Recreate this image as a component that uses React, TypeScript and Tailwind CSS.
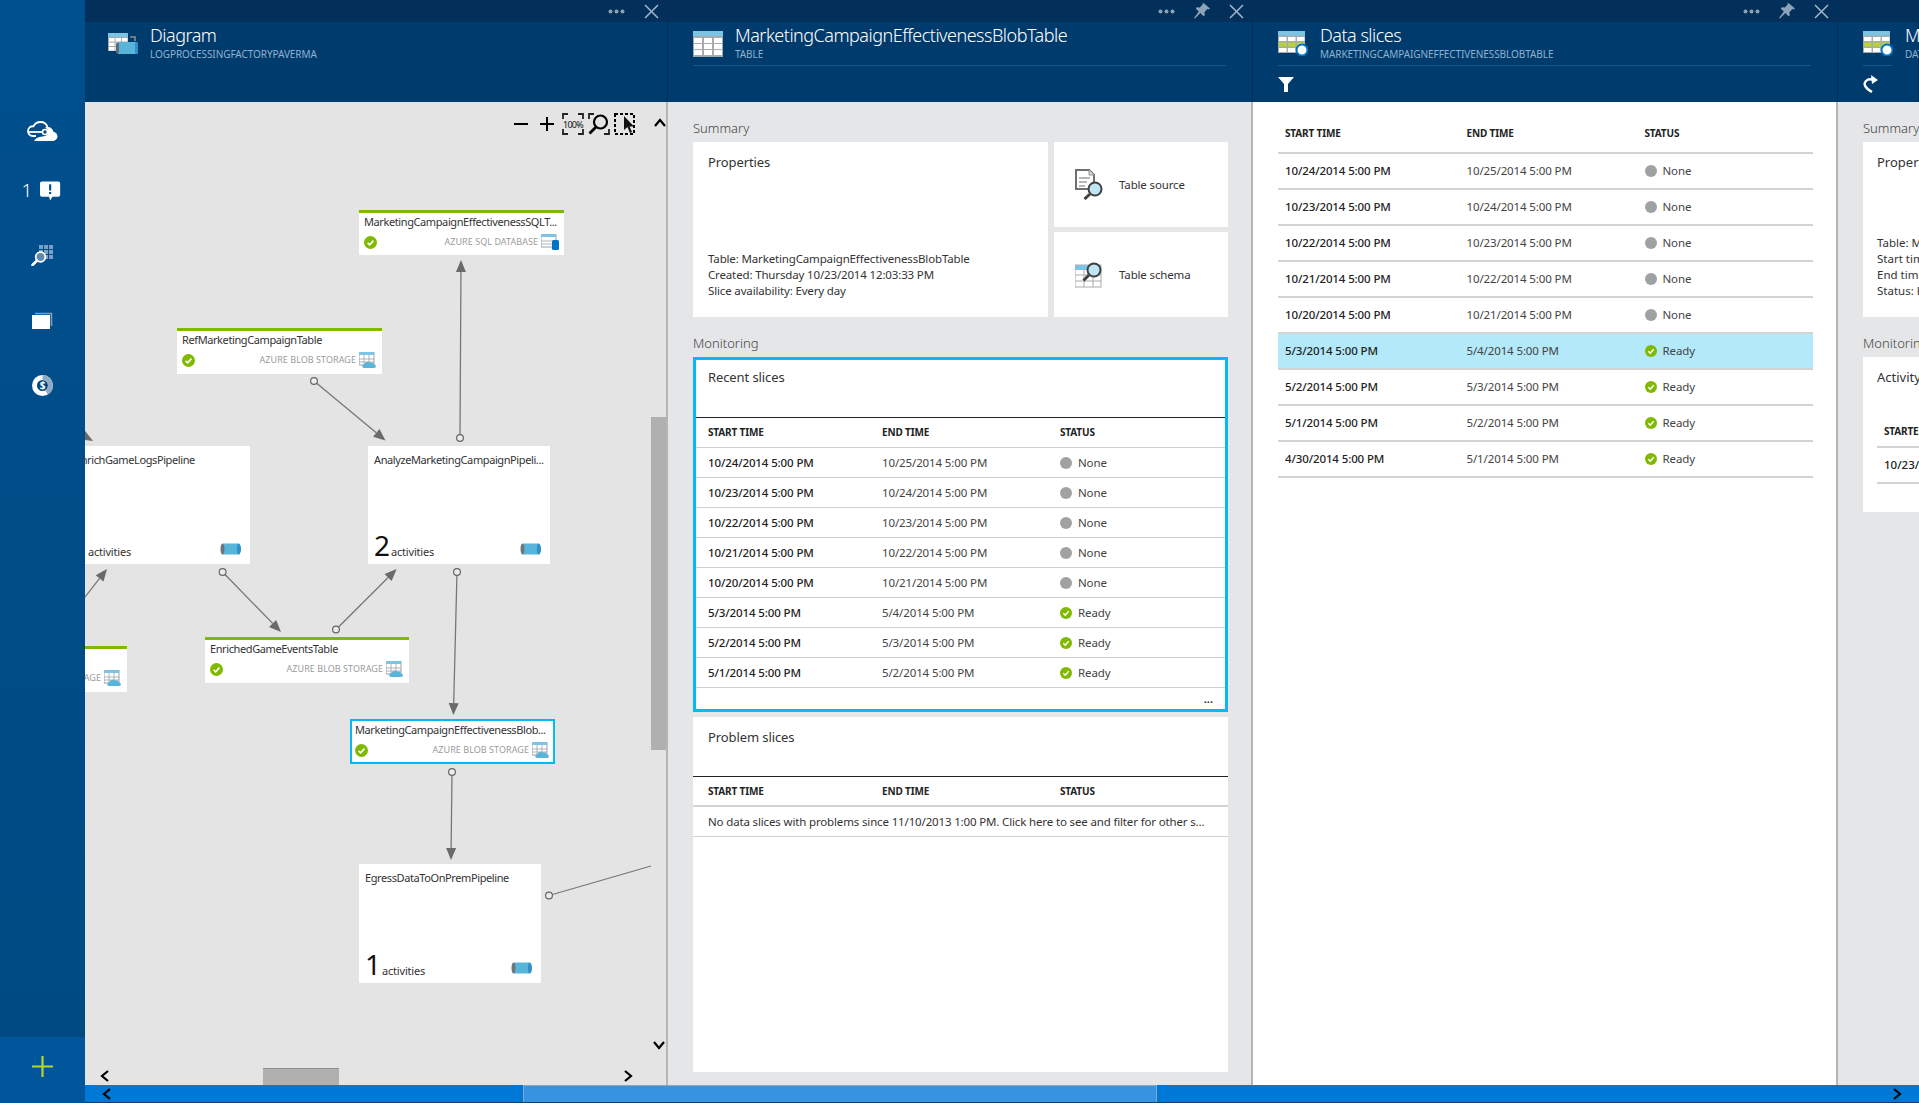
import React from "react";

type SliceRow = [string, string, "None" | "Ready"];

const recentRows: SliceRow[] = [
  ["10/24/2014 5:00 PM", "10/25/2014 5:00 PM", "None"],
  ["10/23/2014 5:00 PM", "10/24/2014 5:00 PM", "None"],
  ["10/22/2014 5:00 PM", "10/23/2014 5:00 PM", "None"],
  ["10/21/2014 5:00 PM", "10/22/2014 5:00 PM", "None"],
  ["10/20/2014 5:00 PM", "10/21/2014 5:00 PM", "None"],
  ["5/3/2014 5:00 PM", "5/4/2014 5:00 PM", "Ready"],
  ["5/2/2014 5:00 PM", "5/3/2014 5:00 PM", "Ready"],
  ["5/1/2014 5:00 PM", "5/2/2014 5:00 PM", "Ready"],
];
const allRows: SliceRow[] = [...recentRows, ["4/30/2014 5:00 PM", "5/1/2014 5:00 PM", "Ready"]];

function CheckDot({ size = 13 }: { size?: number }) {
  return (
    <svg width={size} height={size} viewBox="0 0 13 13" className="shrink-0">
      <circle cx="6.5" cy="6.5" r="6.5" fill="#7fba00" />
      <path d="M3.6 6.8 5.7 8.8 9.4 4.6" fill="none" stroke="#fff" strokeWidth="1.6" />
    </svg>
  );
}

function StatusIcon({ status }: { status: "None" | "Ready" }) {
  return status === "Ready" ? <CheckDot size={12} /> : <span className="h-3 w-3 shrink-0 rounded-full bg-[#a0a1a2]" />;
}

function TableIcon() {
  return (
    <svg width="30" height="26" viewBox="0 0 30 26">
      <rect width="30" height="26" fill="#a7abae" />
      <rect width="30" height="5" fill="#7cc4e4" />
      {[7, 13, 19].map((y) =>
        [1, 11, 21].map((x) => <rect key={x + "-" + y} x={x} y={y} width="8" height="5" fill="#fff" />)
      )}
    </svg>
  );
}

function SliceIcon() {
  return (
    <svg width="30" height="25" viewBox="0 0 30 25">
      <rect width="27" height="22" fill="#a7abae" />
      <rect width="27" height="4.5" fill="#7cc4e4" />
      {[6, 11.5, 17].map((y, r) =>
        [1, 10, 19].map((x) => (
          <rect key={x + "-" + y} x={x} y={y} width="7.5" height="4" fill={r === 1 ? "#b8d432" : "#fff"} />
        ))
      )}
      <circle cx="24" cy="19" r="5.5" fill="#fff" stroke="#0072c6" strokeWidth="2" />
    </svg>
  );
}

function DiagramIcon() {
  return (
    <svg width="31" height="22" viewBox="0 0 31 22">
      <rect x="0" y="0" width="20" height="18" fill="#a7abae" />
      <rect x="0" y="0" width="20" height="4" fill="#7cc4e4" />
      {[5, 9.5, 14].map((y) =>
        [1, 7.5, 14].map((x) => <rect key={x + "-" + y} x={x} y={y} width="5.5" height="3.5" fill="#fff" />)
      )}
      <path d="M22 4h5v4" fill="none" stroke="#8a8f93" strokeWidth="1.6" />
      <rect x="9" y="9" width="21" height="12" rx="2" fill="#59b4d9" />
      <rect x="8" y="9.5" width="3" height="11" rx="1.5" fill="#5a6a78" />
      <rect x="27" y="9" width="3" height="12" rx="1.5" fill="#2f8fc9" />
    </svg>
  );
}

function Dots() {
  return (
    <svg width="17" height="5" viewBox="0 0 17 5">
      <circle cx="2.5" cy="2.5" r="2" fill="#8da4b8" />
      <circle cx="8.5" cy="2.5" r="2" fill="#8da4b8" />
      <circle cx="14.5" cy="2.5" r="2" fill="#8da4b8" />
    </svg>
  );
}

function Pin() {
  return (
    <svg width="16" height="16" viewBox="0 0 16 16">
      <path d="M9.5 0 16 5.5l-1.6 1-1-.5-3 3.2.4 3-1.4 1L6.4 9.9 1 15.5l-1-.5 4.8-6.4L1.8 5.8l1-1.6 3 .2 3-3.2-.3-.9z" fill="#8da4b8" />
    </svg>
  );
}

function Close() {
  return (
    <svg width="15" height="15" viewBox="0 0 15 15">
      <path d="M1 1 14 14M14 1 1 14" stroke="#a4b7c8" strokeWidth="1.5" />
    </svg>
  );
}

function BladeHeader({
  icon,
  title,
  subtitle,
  pin = true,
  left = false,
  rule = true,
  actions = true,
  command,
}: {
  icon: React.ReactNode;
  title: string;
  subtitle: string;
  pin?: boolean;
  left?: boolean;
  rule?: boolean;
  actions?: boolean;
  command?: React.ReactNode;
}) {
  return (
    <div className="flex h-[102px] shrink-0 flex-col border-r border-[#002f57]">
      <div className="flex h-[22px] items-center justify-end bg-[#02305a] pr-[0px]">
        {actions && (
          <div className="-mr-[2px] flex items-center">
            <span className="flex w-[35px] justify-center"><Dots /></span>
            {pin && <span className="flex w-[35px] justify-center"><Pin /></span>}
            <span className="flex w-[35px] justify-center"><Close /></span>
          </div>
        )}
      </div>
      <div className={"flex flex-1 flex-col bg-[#003b6e] pr-[26px] " + (left ? "pl-[23px]" : "pl-[25px]")}>
        <div className={"flex h-[44px] " + (rule ? "border-b border-[#1c5688]" : "")}>
          <div className={"flex w-[42px] shrink-0 items-start " + (left ? "pt-[11px]" : "pt-[9px]")}>{icon}</div>
          <div className="min-w-0 whitespace-nowrap">
            <div className="text-[18px] font-light leading-[26px] tracking-[-0.5px] text-white">{title}</div>
            <div className="-mt-px text-[10px] leading-[14px] tracking-[-0.07px] text-[#8fb2cf]">{subtitle}</div>
          </div>
        </div>
        <div className="flex flex-1 items-center">{command}</div>
      </div>
    </div>
  );
}

function Sidebar() {
  return (
    <div className="flex w-[85px] shrink-0 flex-col bg-linear-to-b from-[#004f8e] to-[#004a82]">
      <div className="flex flex-1 flex-col items-center">
        <svg width="31" height="21" viewBox="0 0 31 21" className="mt-[121px]">
          <path d="M9 15H6C2.500 15 1 12.500 1 10 1 7 3.500 5 6.500 5.300 8 2 11 1 13.500 1 17 1 19.500 3 20.500 6" fill="none" stroke="#fff" strokeWidth="1.800" />
          <path d="M7 20C10 15 15 16 18 15 21 14 22 11 20 8L18 6.500C19 6 20 6 20.500 6 24 6 26 8 26.500 11 29 11 30.500 13.500 30.500 15.500 30.500 18 28 20 25 20Z" fill="#fff" />
          <path d="M2 11H15" stroke="#fff" strokeWidth="1.800" />
          <circle cx="18" cy="11" r="2.500" fill="#004d8a" stroke="#fff" strokeWidth="1.600" />
        </svg>
        <div className="mt-[39px] flex h-[20px] w-[36px] items-start gap-[8px] self-center">
          <span className="-ml-[3px] text-[19px] font-light leading-[18px] text-white">1</span>
          <svg width="21" height="20" viewBox="0 0 21 20">
            <path d="M2 0h17a2 2 0 0 1 2 2v12a2 2 0 0 1-2 2h-6l-2.500 4-1-4H2a2 2 0 0 1-2-2V2a2 2 0 0 1 2-2z" fill="#fff" />
            <rect x="9.500" y="3" width="2.200" height="6.500" fill="#004d8a" />
            <rect x="9.500" y="11" width="2.200" height="2.200" fill="#004d8a" />
          </svg>
        </div>
        <svg width="23" height="21" viewBox="0 0 23 21" className="mt-[44px]">
          {[0, 5, 10].map((y) =>
            [8, 13, 18].map((x) => <rect key={x + "-" + y} x={x} y={y} width="4" height="4" fill="#7f9fc0" />)
          )}
          <circle cx="9.500" cy="12" r="4.800" fill="#5f88b0" stroke="#fff" strokeWidth="1.800" />
          <path d="M6 15.500 1.500 20" stroke="#fff" strokeWidth="2.600" strokeLinecap="round" />
        </svg>
        <svg width="21" height="17" viewBox="0 0 21 17" className="mt-[46px]">
          <path d="M3 1.500h16.500V14" fill="none" stroke="#7f9fc0" strokeWidth="1.600" />
          <rect x="0" y="3" width="18" height="14" fill="#fff" />
        </svg>
        <svg width="21" height="21" viewBox="0 0 21 21" className="mt-[46px]">
          <circle cx="10.500" cy="10.500" r="8" fill="#00467c" stroke="#fff" strokeWidth="5" />
          <path d="M10.500 2.500a8 8 0 0 1 8 8 8 8 0 0 1-4 6.900" fill="none" stroke="#8eaac4" strokeWidth="5" />
          <text x="10.500" y="14" textAnchor="middle" fontSize="10" fontWeight="700" fill="#fff">$</text>
        </svg>
      </div>
      <div className="flex h-[66px] items-center justify-center bg-[#00559b] pb-[8px]">
        <svg width="21" height="21" viewBox="0 0 21 21">
          <path d="M10.500 0v21M0 10.500h21" stroke="#b8d432" strokeWidth="2.200" />
        </svg>
      </div>
    </div>
  );
}

function Chevron({ dir, className, color = "#000" }: { dir: "l" | "r" | "u" | "d"; className?: string; color?: string }) {
  const d = { l: "M8 1 2 6l6 5", r: "M2 1l6 5-6 5", u: "M1 8l5-6 5 6", d: "M1 2l5 6 5-6" }[dir];
  return (
    <svg width={dir === "l" || dir === "r" ? 10 : 12} height={dir === "l" || dir === "r" ? 12 : 10} viewBox={dir === "l" || dir === "r" ? "0 0 10 12" : "0 0 12 10"} className={className}>
      <path d={d} fill="none" stroke={color} strokeWidth="2.200" />
    </svg>
  );
}

function Toolbar() {
  return (
    <div className="absolute right-[30px] top-[11px] flex h-[22px] items-center">
      <svg width="14" height="2" viewBox="0 0 14 2" className="mr-[12px]"><rect width="14" height="2" fill="#000" /></svg>
      <svg width="14" height="14" viewBox="0 0 14 14" className="mr-[8px]"><path d="M7 0v14M0 7h14" stroke="#000" strokeWidth="2" /></svg>
      <span className="relative mr-[4px] flex h-[22px] w-[22px] items-center justify-center text-[9px] leading-none tracking-[-0.7px] text-[#111]">
        <svg width="22" height="22" viewBox="0 0 22 22" className="absolute inset-0">
          <path d="M6 1H1v5M16 1h5v5M6 21H1v-5M16 21h5v-5" fill="none" stroke="#222" strokeWidth="1.800" />
        </svg>
        100%
      </span>
      <svg width="22" height="22" viewBox="0 0 22 22" className="mr-[4px]">
        <path d="M6 1H1v5M16 21h5v-5" fill="none" stroke="#222" strokeWidth="1.800" />
        <circle cx="12.500" cy="9" r="6.500" fill="none" stroke="#000" strokeWidth="2.200" />
        <path d="M8 14 1.500 20.500" stroke="#000" strokeWidth="2.800" />
      </svg>
      <svg width="22" height="22" viewBox="0 0 22 22">
        <rect x="1" y="1" width="19" height="20" fill="none" stroke="#000" strokeWidth="2" strokeDasharray="3 2" />
        <path d="M10 3v14l3.500-3 2.500 6 2-1-2.500-5.500H20z" fill="#111" />
      </svg>
    </div>
  );
}

function BlobGlyph() {
  return (
    <svg width="18" height="16" viewBox="0 0 18 16" className="shrink-0">
      <rect x="0" y="0" width="15" height="13" fill="#fff" stroke="#9ba1a6" />
      <rect x="0" y="0" width="15" height="3" fill="#7cc4e4" />
      <path d="M0 7h15M0 10h15M5 3v10M10 3v10" stroke="#9ba1a6" strokeWidth=".8" />
      <path d="M5 16c-2 0-2.500-3 0-3.400C6 10 9 9 11 10.500c2-.5 3.500.5 4 2 2 0 3 3.500 0 3.500z" fill="#59b4d9" />
    </svg>
  );
}

function SqlGlyph() {
  return (
    <svg width="18" height="16" viewBox="0 0 18 16" className="shrink-0">
      <rect x="0" y="0" width="15" height="13" fill="#fff" stroke="#9ba1a6" />
      <rect x="0" y="0" width="15" height="3" fill="#7cc4e4" />
      <path d="M0 7h15M0 10h15" stroke="#9ba1a6" strokeWidth=".8" />
      <rect x="11" y="6" width="7" height="10" rx="1.500" fill="#0072c6" />
    </svg>
  );
}

function PipeGlyph() {
  return (
    <svg width="21" height="12" viewBox="0 0 21 12" className="shrink-0">
      <path d="M3 .5H18.500C20.500 2 21 4 21 6S20.500 10 18.500 11.500H3Z" fill="#59b4d9" />
      <ellipse cx="2.500" cy="6" rx="2" ry="5.500" fill="#6b7680" />
      <ellipse cx="18.800" cy="6" rx="2" ry="5.500" fill="#2f8fc9" />
    </svg>
  );
}

function DatasetNode({
  pos,
  name,
  kind,
  glyph,
  selected = false,
  check = true,
}: {
  pos: string;
  name: string;
  kind: string;
  glyph: React.ReactNode;
  selected?: boolean;
  check?: boolean;
}) {
  return (
    <div className={"absolute overflow-hidden bg-white " + pos + " " + (selected ? "border-[2px] border-[#00bcf2]" : "border-t-[3px] border-[#7fba00]")}>
      <div className={"h-[18px] overflow-hidden whitespace-nowrap text-[11px] leading-[18px] tracking-[-0.4px] text-[#333] " + (selected ? "px-[3px]" : "px-[5px]")}>{name}</div>
      <div className={"flex h-[22px] items-center justify-end " + (selected ? "px-[3px]" : "px-[5px]")}>
        {check && <CheckDot />}
        {check && <span className="flex-1" />}
        <span className="mr-[3px] shrink-0 whitespace-nowrap text-[9px] tracking-[0.05px] text-[#9b9b9b]">{kind}</span>
        {glyph}
      </div>
    </div>
  );
}

function PipelineNode({ pos, name, count, nameClass = "", padClass = "pl-[6px]" }: { pos: string; name: string; count?: string; nameClass?: string; padClass?: string }) {
  return (
    <div className={"absolute flex flex-col justify-between overflow-hidden bg-white pb-[4px] pt-[6px] " + pos}>
      <div className={"whitespace-nowrap text-[11px] leading-[16px] tracking-[-0.4px] text-[#333] " + padClass + " " + nameClass}>{name}</div>
      <div className={"flex items-end justify-between pr-[9px] " + padClass}>
        <div className="flex items-baseline gap-px">
          {count && <span className="text-[28px] leading-[30px] text-[#111]">{count}</span>}
          <span className="text-[11px] tracking-[-0.2px] text-[#333]">activities</span>
        </div>
        <span className="mb-[5px]"><PipeGlyph /></span>
      </div>
    </div>
  );
}

const links: [number, number, number, number][] = [
  [314, 381, 385.5, 440.500],
  [460, 438, 461, 260],
  [457, 572, 453.400, 715],
  [222.600, 572, 281, 632],
  [336, 629.500, 396.600, 569],
  [452, 772, 451, 860],
];

function Arrow({ x1, y1, x2, y2, start = true }: { x1: number; y1: number; x2: number; y2: number; start?: boolean }) {
  const a = Math.atan2(y2 - y1, x2 - x1);
  const len = 12;
  const wid = 5;
  const bx = x2 - len * Math.cos(a);
  const by = y2 - len * Math.sin(a);
  const px = -Math.sin(a) * wid;
  const py = Math.cos(a) * wid;
  return (
    <g>
      <line x1={x1} y1={y1} x2={bx} y2={by} stroke="#777" strokeWidth="1.300" />
      <polygon points={`${x2},${y2} ${bx + px},${by + py} ${bx - px},${by - py}`} fill="#6a6a6a" />
      {start && <circle cx={x1} cy={y1} r="3.400" fill="#ececec" stroke="#666" strokeWidth="1.200" />}
    </g>
  );
}

function DiagramBody() {
  return (
    <div className="relative flex-1 overflow-hidden border-r-2 border-[#b3b5b7] bg-[#e4e4e4]">
      <svg className="absolute inset-0" width="582" height="983" viewBox="85 102 582 983">
        {links.map((l, i) => (
          <Arrow key={i} x1={l[0]} y1={l[1]} x2={l[2]} y2={l[3]} />
        ))}
        <Arrow x1={74} y1={611} x2={107} y2={569} start={false} />
        <Arrow x1={70} y1={428} x2={93} y2={441} start={false} />
        <line x1="549" y1="895.500" x2="651" y2="866" stroke="#777" strokeWidth="1.300" />
        <circle cx="549" cy="895.500" r="3.400" fill="#ececec" stroke="#666" strokeWidth="1.200" />
      </svg>

      <Toolbar />
      <Chevron dir="u" className="absolute left-[569px] top-[16px]" />
      <Chevron dir="d" className="absolute left-[568px] top-[938px]" />
      <Chevron dir="l" className="absolute left-[15px] top-[968px]" />
      <Chevron dir="r" className="absolute left-[538px] top-[968px]" />
      <div className="absolute left-[566px] top-[315px] h-[333px] w-[15px] bg-[#b0b0b0]" />
      <div className="absolute left-[178px] top-[966px] h-[17px] w-[76px] border-t border-[#8f8f8f] bg-[#b0b0b0]" />

      <DatasetNode pos="left-[274px] top-[108px] h-[45px] w-[205px]" name="MarketingCampaignEffectivenessSQLT..." kind="AZURE SQL DATABASE" glyph={<SqlGlyph />} />
      <DatasetNode pos="left-[92px] top-[226px] h-[46px] w-[205px]" name="RefMarketingCampaignTable" kind="AZURE BLOB STORAGE" glyph={<BlobGlyph />} />
      <PipelineNode pos="left-0 top-[344px] h-[118px] w-[165px]" name="EnrichGameLogsPipeline" nameClass="-ml-[13px]" padClass="pl-[3px]" />
      <PipelineNode pos="left-[283px] top-[344px] h-[118px] w-[182px]" name="AnalyzeMarketingCampaignPipeli..." count="2" />
      <DatasetNode pos="left-[120px] top-[535px] h-[46px] w-[204px]" name="EnrichedGameEventsTable" kind="AZURE BLOB STORAGE" glyph={<BlobGlyph />} />
      <DatasetNode pos="left-0 top-[544px] h-[46px] w-[42px]" name="" kind="AZURE BLOB STORAGE" glyph={<BlobGlyph />} check={false} />
      <DatasetNode pos="left-[265px] top-[617px] h-[45px] w-[205px]" name="MarketingCampaignEffectivenessBlob..." kind="AZURE BLOB STORAGE" glyph={<BlobGlyph />} selected />
      <PipelineNode pos="left-[274px] top-[762px] h-[119px] w-[182px]" name="EgressDataToOnPremPipeline" count="1" />
    </div>
  );
}

function SliceHeader({ widths }: { widths: [string, string] }) {
  return (
    <>
      <span className={"shrink-0 " + widths[0]}>START TIME</span>
      <span className={"shrink-0 " + widths[1]}>END TIME</span>
      <span>STATUS</span>
    </>
  );
}

function SliceCells({ row, widths }: { row: SliceRow; widths: [string, string] }) {
  return (
    <>
      <span className={"shrink-0 font-medium text-[#222] " + widths[0]}>{row[0]}</span>
      <span className={"shrink-0 text-[#444] " + widths[1]}>{row[1]}</span>
      <span className="flex items-center gap-[6px] text-[#444]">
        <StatusIcon status={row[2]} />
        {row[2]}
      </span>
    </>
  );
}

const cardCols: [string, string] = ["w-[174px]", "w-[178px]"];
const fullCols: [string, string] = ["w-[181.500px]", "w-[178px]"];

function TableSection({ title, children, className }: { title: string; children: React.ReactNode; className: string }) {
  return (
    <div className={"flex flex-col bg-white " + className}>
      <div className="h-[60px] shrink-0 border-b border-[#222] pl-[15px] pt-[10px] text-[13px] leading-[20px] tracking-[-0.1px] text-[#333]">{title}</div>
      <div className="flex h-[30px] shrink-0 items-center border-b-2 border-[#d4d4d4] pl-[15px] text-[10px] font-bold tracking-[-0.15px] text-[#222]">
        <SliceHeader widths={cardCols} />
      </div>
      {children}
    </div>
  );
}

function TableBlade() {
  return (
    <div className="flex w-[585px] shrink-0 flex-col">
      <BladeHeader icon={<TableIcon />} title="MarketingCampaignEffectivenessBlobTable" subtitle="TABLE" />
      <div className="flex flex-1 flex-col border-r-2 border-[#b3b5b7] bg-[#e4e6e8] pl-[25px] pr-[23px] pt-[14px]">
        <div className="mb-[2px] h-[24px] text-[13px] font-light leading-[24px] text-[#444]">Summary</div>
        <div className="flex h-[175px] shrink-0 gap-[6px]">
          <div className="flex w-[355px] flex-col justify-between bg-white pb-[18px] pl-[15px] pt-[10px] text-[#333]">
            <div className="text-[13px] leading-[20px] tracking-[-0.1px]">Properties</div>
            <div className="text-[11.500px] leading-[16px] tracking-[-0.15px]">
              <div>Table: MarketingCampaignEffectivenessBlobTable</div>
              <div>Created: Thursday 10/23/2014 12:03:33 PM</div>
              <div>Slice availability: Every day</div>
            </div>
          </div>
          <div className="flex w-[174px] flex-col gap-[5px]">
            <div className="flex h-[85px] items-center bg-white pl-[21px] text-[11.500px] tracking-[-0.15px] text-[#333]">
              <svg width="28" height="31" viewBox="0 0 28 31" className="mr-[16px]">
                <path d="M1 1h13l5 5v14H1z" fill="#fff" stroke="#707070" strokeWidth="2" />
                <path d="M14 1v5h5" fill="#ddd" stroke="#909090" />
                <path d="M4 9h11M4 13h8M4 17h6" stroke="#707070" strokeWidth="1.200" />
                <circle cx="20" cy="20" r="6.500" fill="#bfe6f5" stroke="#404040" strokeWidth="2" />
                <path d="M15 25 9.500 30" stroke="#404040" strokeWidth="3" />
              </svg>
              Table source
            </div>
            <div className="flex h-[85px] items-center bg-white pl-[21px] text-[11.500px] tracking-[-0.15px] text-[#333]">
              <svg width="28" height="26" viewBox="0 0 28 26" className="mr-[16px]">
                <rect x="0" y="3" width="26" height="22" fill="#fff" stroke="#aaa" />
                <rect x="0" y="3" width="26" height="5" fill="#7cc4e4" />
                <path d="M0 13h26M0 19h26M9 8v17M18 8v17" stroke="#aaa" />
                <circle cx="19" cy="8" r="6.500" fill="#bfe6f5" stroke="#404040" strokeWidth="2" />
                <path d="M14 13 8.500 18.500" stroke="#404040" strokeWidth="3" />
              </svg>
              Table schema
            </div>
          </div>
        </div>
        <div className="mb-[2px] mt-[14px] h-[24px] text-[13px] font-light leading-[24px] text-[#444]">Monitoring</div>
        <div className="flex h-[355px] shrink-0 flex-col border-[3px] border-[#00bcf2] bg-white">
          <div className="h-[58px] shrink-0 border-b border-[#222] pl-[12px] pt-[7px] text-[13px] leading-[20px] tracking-[-0.1px] text-[#333]">Recent slices</div>
          <div className="flex h-[30px] shrink-0 items-center border-b border-[#cfcfcf] pl-[12px] text-[10px] font-bold tracking-[-0.15px] text-[#222]">
            <SliceHeader widths={cardCols} />
          </div>
          {recentRows.map((row) => (
            <div key={row[0]} className="flex h-[30px] shrink-0 items-center border-b border-[#cfcfcf] pl-[12px] text-[11.500px] tracking-[-0.12px]">
              <SliceCells row={row} widths={cardCols} />
            </div>
          ))}
          <div className="flex flex-1 items-center justify-end pr-[12px] text-[11px] font-bold leading-none text-[#333]">...</div>
        </div>
        <TableSection title="Problem slices" className="mt-[5px] h-[355px] shrink-0">
          <div className="flex h-[30px] shrink-0 items-center border-b border-[#cfcfcf] pl-[15px] text-[11.500px] tracking-[-0.15px] text-[#333]">
            No data slices with problems since 11/10/2013 1:00 PM. Click here to see and filter for other s...
          </div>
        </TableSection>
      </div>
    </div>
  );
}

function SlicesBlade() {
  return (
    <div className="flex w-[585px] shrink-0 flex-col">
      <BladeHeader
        icon={<SliceIcon />}
        title="Data slices"
        subtitle="MARKETINGCAMPAIGNEFFECTIVENESSBLOBTABLE"
        command={
          <svg width="16" height="15" viewBox="0 0 16 15">
            <path d="M0 0h16L10 7v8H6V7z" fill="#fff" />
          </svg>
        }
      />
      <div className="flex-1 border-r-2 border-[#b3b5b7] bg-white pl-[25px] pr-[23px]">
        <div className="flex h-[52px] items-center border-b-2 border-[#d4d4d4] pl-[7px] pt-[12px] text-[10px] font-bold tracking-[-0.15px] text-[#222]">
          <SliceHeader widths={fullCols} />
        </div>
        {allRows.map((row) => (
          <div
            key={row[0]}
            className={"flex h-[36px] items-center border-b-2 border-[#d4d4d4] pl-[7px] text-[11.500px] tracking-[-0.12px] " + (row[0] === "5/3/2014 5:00 PM" ? "bg-[#b3e9f9]" : "")}
          >
            <SliceCells row={row} widths={fullCols} />
          </div>
        ))}
      </div>
    </div>
  );
}

function LastBlade() {
  return (
    <div className="flex min-w-0 flex-1 flex-col">
      <BladeHeader
        icon={<SliceIcon />}
        title="MarketingCampaignEffectiveness"
        subtitle="DATA SLICE"
        actions={false}
        command={
          <svg width="15" height="18" viewBox="0 0 15 18">
            <path d="M9 17C2 13 0 9 3 6 5 4 8 4 11 5" fill="none" stroke="#fff" strokeWidth="2.400" />
            <path d="M8 0 15 5 9 9z" fill="#fff" />
          </svg>
        }
      />
      <div className="flex-1 overflow-hidden whitespace-nowrap bg-[#e4e6e8] pl-[25px] pt-[14px]">
        <div className="mb-[2px] h-[24px] text-[13px] font-light leading-[24px] text-[#444]">Summary</div>
        <div className="flex h-[175px] w-[200px] flex-col justify-between bg-white pb-[18px] pl-[14px] pt-[10px] text-[#333]">
          <div className="text-[13px] leading-[20px]">Properties</div>
          <div className="text-[11.500px] leading-[16px]">
            <div>Table: MarketingCampaign</div>
            <div>Start time: 10/23/2014</div>
            <div>End time: 10/24/2014</div>
            <div>Status: Ready</div>
          </div>
        </div>
        <div className="mb-[2px] mt-[14px] h-[24px] text-[13px] font-light leading-[24px] text-[#444]">Monitoring</div>
        <div className="h-[155px] w-[200px] bg-white pl-[14px] pt-[10px] text-[#333]">
          <div className="h-[50px] text-[13px] leading-[20px]">Activity windows</div>
          <div className="flex h-[31px] items-center border-b-2 border-[#d4d4d4] pl-[7px] text-[10px] font-bold tracking-[-0.15px] text-[#222]">STARTED</div>
          <div className="flex h-[36px] items-center border-b-2 border-[#d4d4d4] pl-[7px] text-[11.500px] font-medium text-[#222]">10/23/2014</div>
        </div>
      </div>
    </div>
  );
}

export default function App() {
  return (
    <div className="flex h-[1103px] w-[1919px] overflow-hidden font-['Noto_Sans',sans-serif]">
      <Sidebar />
      <div className="flex min-w-0 flex-1 flex-col">
        <div className="flex h-[1085px] shrink-0">
          <div className="flex w-[583px] shrink-0 flex-col">
            <BladeHeader icon={<DiagramIcon />} title="Diagram" subtitle="LOGPROCESSINGFACTORYPAVERMA" pin={false} left rule={false} />
            <DiagramBody />
          </div>
          <TableBlade />
          <SlicesBlade />
          <LastBlade />
        </div>
        <div className="relative h-[18px] border-b border-[#1d3a5f] bg-[#0078d7]">
          <div className="ml-[438px] h-full w-[634px] border-x border-t border-[#8fa6ba] bg-[#3593e0]" />
          <Chevron dir="l" className="absolute left-[17px] top-[3px]" />
          <Chevron dir="r" className="absolute right-[17px] top-[3px]" />
        </div>
      </div>
    </div>
  );
}
